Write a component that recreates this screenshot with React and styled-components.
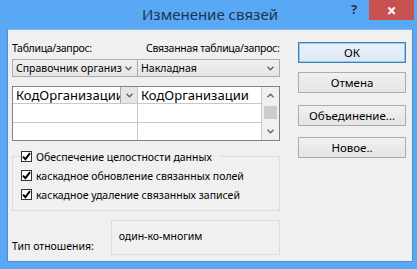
import React from 'react';
import styled, { createGlobalStyle } from 'styled-components';

const GlobalStyle = createGlobalStyle`
    html, body {
        margin: 0;
        padding: 0;
        background: #58a8f5;
    }
    body {
        font-family: "Noto Sans", "Open Sans", sans-serif;
        font-size: 10.5px;
        line-height: 16px;
        color: #000;
    }
`;

const Chevron = ({ up, color = '#606060' }) => (
    <svg width="7" height="5" viewBox="0 0 7 5">
        <path
            d={up ? 'M0.5 4.2 L3.5 1.2 L6.5 4.2' : 'M0.5 0.8 L3.5 3.8 L6.5 0.8'}
            fill="none"
            stroke={color}
            strokeWidth="1.3"
        />
    </svg>
);

const Tick = () => (
    <svg width="9" height="9" viewBox="0 0 9 9">
        <path d="M1 4.6 L3.4 7.2 L8 1.2" fill="none" stroke="#000" strokeWidth="1.9" />
    </svg>
);

const Check = ({ label }) => (
    <CheckRow>
        <Box><Tick /></Box>
        <span>{label}</span>
    </CheckRow>
);

const Combo = ({ value, width }) => (
    <ComboBox $width={width}>
        <span>{value}</span>
        <Chevron />
    </ComboBox>
);

const App = () => {
    return (
        <>
            <GlobalStyle />
            <Window>
                <TitleBar>
                    <Title>Изменение связей</Title>
                    <Help>?</Help>
                    <Close>×</Close>
                </TitleBar>
                <Client>
                    <LeftCol>
                        <Labels>
                            <Label $width={134}>Таблица/запрос:</Label>
                            <Label>Связанная таблица/запрос:</Label>
                        </Labels>
                        <Combos>
                            <Combo value="Справочник организ" width={126} />
                            <Combo value="Накладная" width={143} />
                        </Combos>
                        <Grid>
                            <Cells>
                                <Cell>
                                    <CellText>КодОрганизации</CellText>
                                    <CellDrop><Chevron /></CellDrop>
                                </Cell>
                                <Cell>
                                    <CellText>КодОрганизации</CellText>
                                </Cell>
                                <Cell />
                                <Cell />
                                <Cell />
                                <Cell />
                            </Cells>
                            <Scroll>
                                <ScrollArrow><Chevron up /></ScrollArrow>
                                <Track><Thumb /></Track>
                                <ScrollArrow><Chevron /></ScrollArrow>
                            </Scroll>
                        </Grid>
                        <Group>
                            <Legend><Check label="Обеспечение целостности данных" /></Legend>
                            <Check label="каскадное обновление связанных полей" />
                            <Check label="каскадное удаление связанных записей" />
                        </Group>
                        <Relation>
                            <RelLabel>Тип отношения:</RelLabel>
                            <RelBox>один-ко-многим</RelBox>
                        </Relation>
                    </LeftCol>
                    <Buttons>
                        <Button $primary $top={12}>ОК</Button>
                        <Button $top={9}>Отмена</Button>
                        <Button $top={12}>Объединение...</Button>
                        <Button $top={11}>Новое..</Button>
                    </Buttons>
                </Client>
            </Window>
        </>
    );
};

const Window = styled.div`
    width: 417px;
    height: 269px;
    box-sizing: border-box;
    background: #58a8f5;
    padding: 0 4px 7px 7px;
    display: flex;
    flex-direction: column;
`;

const TitleBar = styled.div`
    height: 29px;
    position: relative;
`;

const Title = styled.div`
    position: absolute;
    left: 0;
    right: 0;
    top: 5px;
    text-align: center;
    font-size: 15px;
    line-height: 18px;
    color: #1f3550;
`;

const Help = styled.div`
    position: absolute;
    left: 344px;
    top: 1px;
    font-size: 13px;
    font-weight: bold;
    color: #1e3656;
`;

const Close = styled.div`
    position: absolute;
    left: 362px;
    top: 0;
    width: 45px;
    height: 20px;
    background: #c75050;
    color: #fff;
    font-size: 17px;
    font-weight: bold;
    display: flex;
    align-items: center;
    justify-content: center;
    line-height: 1;
`;

const Client = styled.div`
    flex: 1;
    background: #f0f0f0;
    border: 1px solid #4f8fd0;
    border-top-color: #7ab7ef;
    box-sizing: border-box;
    display: flex;
    gap: 18px;
    padding: 0 0 0 4px;
`;

const LeftCol = styled.div`
    width: 268px;
    display: flex;
    flex-direction: column;
`;

const Labels = styled.div`
    display: flex;
    margin-top: 10px;
    height: 16px;
    letter-spacing: -0.3px;
`;

const Label = styled.div`
    flex-shrink: 0;
    width: ${p => (p.$width ? `${p.$width}px` : 'auto')};
    white-space: nowrap;
`;

const Combos = styled.div`
    display: flex;
    margin-top: 3px;
`;

const ComboBox = styled.div`
    width: ${p => p.$width}px;
    height: 18px;
    box-sizing: border-box;
    border: 1px solid #acacac;
    margin-right: -1px;
    background: linear-gradient(#efefef, #e5e5e5);
    display: flex;
    align-items: center;
    justify-content: space-between;
    padding: 0 5px 0 3px;
    white-space: nowrap;
    overflow: hidden;
    span {
        overflow: hidden;
    }
`;

const Grid = styled.div`
    margin-top: 9px;
    height: 55px;
    box-sizing: border-box;
    border: 1px solid #828282;
    background: #fff;
    display: flex;
`;

const Cells = styled.div`
    flex: 1;
    display: grid;
    grid-template-columns: 125px 1fr;
    grid-template-rows: 17px 19px 1fr;
`;

const Cell = styled.div`
    border-right: 1px solid #c8c8c8;
    border-bottom: 1px solid #c8c8c8;
    display: flex;
    align-items: center;
    overflow: hidden;
    position: relative;
    &:nth-child(n + 5) {
        border-bottom: none;
    }
`;

const CellText = styled.span`
    padding-left: 3px;
    white-space: nowrap;
    font-size: 13px;
`;

const CellDrop = styled.div`
    position: absolute;
    right: 0;
    top: 0;
    bottom: 0;
    width: 16px;
    background: #e5e5e5;
    border-left: 1px solid #a5a5a5;
    display: flex;
    align-items: center;
    justify-content: center;
`;

const Scroll = styled.div`
    width: 17px;
    background: #f0f0f0;
    display: flex;
    flex-direction: column;
`;

const ScrollArrow = styled.div`
    height: 17px;
    display: flex;
    align-items: center;
    justify-content: center;
`;

const Track = styled.div`
    flex: 1;
    padding: 2px 2px 0;
`;

const Thumb = styled.div`
    height: 13px;
    background: #cdcdcd;
`;

const Group = styled.fieldset`
    margin: 6px 0 0;
    padding: 0 0 6px 8px;
    border: 1px solid #dcdcdc;
    min-width: 0;
`;

const Legend = styled.legend`
    padding: 0 8px 0 0;
`;

const CheckRow = styled.div`
    display: flex;
    align-items: center;
    height: 19px;
    gap: 4px;
    white-space: nowrap;
`;

const Box = styled.span`
    width: 11px;
    height: 11px;
    box-sizing: border-box;
    border: 1px solid #333;
    background: #fff;
    display: flex;
    align-items: center;
    justify-content: center;
`;

const Relation = styled.div`
    display: flex;
    align-items: flex-start;
    margin-top: 9px;
`;

const RelLabel = styled.div`
    width: 99px;
    margin-top: 18px;
`;

const RelBox = styled.div`
    width: 170px;
    height: 35px;
    box-sizing: border-box;
    border: 1px solid #dcdcdc;
    padding: 7px 0 0 7px;
`;

const Buttons = styled.div`
    display: flex;
    flex-direction: column;
    width: 108px;
`;

const Button = styled.div`
    margin-top: ${p => p.$top}px;
    height: 21px;
    box-sizing: border-box;
    font-size: 11.5px;
    border: 1px solid ${p => (p.$primary ? '#3c7fb1' : '#acacac')};
    box-shadow: ${p => (p.$primary ? 'inset 0 0 0 1px #9bc7ec' : 'none')};
    background: ${p => (p.$primary ? 'linear-gradient(#e8f1f9, #dbe8f4)' : 'linear-gradient(#f0f0f0, #e5e5e5)')};
    display: flex;
    align-items: center;
    justify-content: center;
    white-space: nowrap;
`;

export default App;
